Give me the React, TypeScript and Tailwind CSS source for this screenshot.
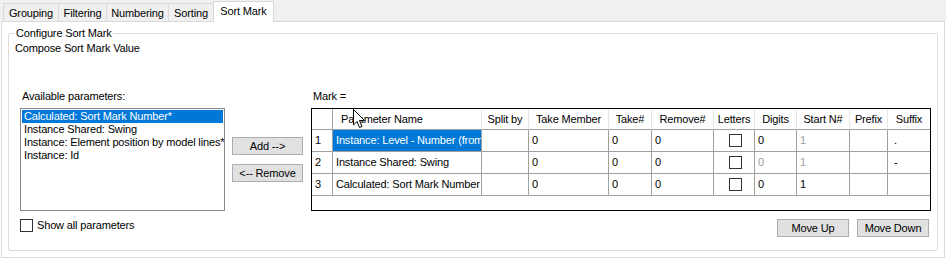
import React from "react";

const font = { fontFamily: '"Liberation Sans", Arial, sans-serif' };

const tabs: [string, string][] = [
  ["Grouping", "w-[55px]"],
  ["Filtering", "w-[48px]"],
  ["Numbering", "w-[62px]"],
  ["Sorting", "w-[45px]"],
];

const cols = [
  "Parameter Name",
  "Split by",
  "Take Member",
  "Take#",
  "Remove#",
  "Letters",
  "Digits",
  "Start N#",
  "Prefix",
  "Suffix",
];

type Row = {
  n: string;
  name: string;
  sel?: boolean;
  digitsGray?: boolean;
  startGray?: boolean;
  suffix: string;
};

const rows: Row[] = [
  { n: "1", name: "Instance: Level - Number (from level)", sel: true, startGray: true, suffix: "." },
  { n: "2", name: "Instance Shared: Swing", digitsGray: true, startGray: true, suffix: "-" },
  { n: "3", name: "Calculated: Sort Mark Number", suffix: "" },
];

function Cell({ children, className = "" }: { children?: React.ReactNode; className?: string }) {
  return (
    <div
      className={
        "h-[22px] border-r border-b border-[#a0a0a0] overflow-hidden whitespace-nowrap pl-[3px] flex items-center " +
        className
      }
    >
      {children}
    </div>
  );
}

export default function App() {
  return (
    <div
      className="w-[946px] h-[259px] bg-white text-[11px] tracking-[-0.15px] text-black overflow-hidden relative"
      style={font}
    >
      {/* tab strip */}
      <div className="h-[21px] bg-[#f0f0f0] flex items-end pl-[3px] relative z-10">
        {tabs.map(([t, w]) => (
          <div
            key={t}
            className={
              w +
              " h-[18px] border-t border-l border-[#d9d9d9] bg-[#f0f0f0] flex items-center justify-center leading-none pt-[1px]"
            }
          >
            {t}
          </div>
        ))}
        <div className="w-[61px] h-[21px] -mb-px border-t border-l border-r border-[#d9d9d9] bg-white flex items-center justify-center leading-none pb-[1px]">
          Sort Mark
        </div>
      </div>

      {/* tab panel */}
      <div className="h-[237px] mx-px border border-[#d9d9d9] pt-[11px] px-[6px]">
        {/* group box */}
        <div className="relative h-[218px] border border-[#dcdcdc] rounded-[2px]">
          <span className="absolute -top-[8px] left-[6px] bg-white px-px leading-[14px]">Configure Sort Mark</span>
          <div className="pl-[6px] pt-[7px] leading-[14px] h-[21px]">Compose Sort Mark Value</div>

          <div className="flex mt-[33px] pl-[11px]">
            {/* left column */}
            <div className="w-[205px] flex flex-col">
              <div className="h-[20px] pl-[2px] leading-[14px] pt-[1px]">Available parameters:</div>
              <div className="h-[103px] border border-[#828790] p-px leading-[13px] overflow-hidden">
                <div className="bg-[#0078d7] text-white pl-[2px] h-[13px] whitespace-nowrap">Calculated: Sort Mark Number*</div>
                <div className="pl-[2px] whitespace-nowrap">Instance Shared: Swing</div>
                <div className="pl-[2px] whitespace-nowrap">Instance: Element position by model lines*</div>
                <div className="pl-[2px] whitespace-nowrap">Instance: Id</div>
              </div>
              <div className="flex items-center mt-[8px] h-[13px]">
                <div className="w-[13px] h-[13px] border border-[#333333] bg-white" />
                <span className="ml-[4px] leading-none">Show all parameters</span>
              </div>
            </div>

            {/* middle buttons */}
            <div className="ml-[7px] pt-[49px] flex flex-col gap-[9px]">
              <div className="w-[71px] h-[18px] bg-[#e1e1e1] border border-[#adadad] flex items-center justify-center">Add --&gt;</div>
              <div className="w-[71px] h-[18px] bg-[#e1e1e1] border border-[#adadad] flex items-center justify-center">&lt;-- Remove</div>
            </div>

            {/* right column */}
            <div className="ml-[8px] w-[620px] flex flex-col">
              <div className="h-[20px] pl-[2px] leading-[14px] pt-[1px]">Mark =</div>
              <div className="relative h-[103px] border border-black bg-white">
                <div className="grid grid-cols-[21px_149px_47px_80px_43px_62px_41px_42px_53px_38px_42px]">
                  <div className="h-[21px] border-r border-b border-[#a0a0a0]" />
                  {cols.map((c, i) => (
                    <div
                      key={c}
                      className={
                        "h-[21px] border-b border-[#a0a0a0] flex items-center whitespace-nowrap overflow-hidden " +
                        (i === 0 ? "pl-[8px] " : "justify-center ") +
                        (i < cols.length - 1 ? "border-r border-r-[#e5e5e5]" : "")
                      }
                    >
                      {c}
                    </div>
                  ))}
                  {rows.map((r) => (
                    <React.Fragment key={r.n}>
                      <Cell className="pl-[3px]">{r.n}</Cell>
                      <Cell className={r.sel ? "bg-[#0078d7] text-white" : ""}>{r.name}</Cell>
                      <Cell />
                      <Cell>0</Cell>
                      <Cell>0</Cell>
                      <Cell>0</Cell>
                      <Cell className="justify-center pl-0">
                        <div className="w-[13px] h-[13px] border border-[#333333] bg-white" />
                      </Cell>
                      <Cell className={r.digitsGray ? "text-[#a0a0a0]" : ""}>0</Cell>
                      <Cell className={r.startGray ? "text-[#a0a0a0]" : ""}>1</Cell>
                      <Cell />
                      <Cell className="border-r-0 pl-[6px]">{r.suffix}</Cell>
                    </React.Fragment>
                  ))}
                </div>
                {/* mouse cursor */}
                <svg className="absolute left-[41px] top-[0px]" width="13" height="20" viewBox="0 0 13 20">
                  <path d="M0.5 0.5 L0.5 16 L4 12.5 L6.5 18.5 L9 17.5 L6.5 11.5 L11.5 11.5 Z" fill="white" stroke="black" strokeWidth="1" />
                </svg>
              </div>
              <div className="flex justify-end gap-[8px] mt-[8px] pr-[2px]">
                <div className="w-[72px] h-[18px] bg-[#e1e1e1] border border-[#adadad] flex items-center justify-center">Move Up</div>
                <div className="w-[72px] h-[18px] bg-[#e1e1e1] border border-[#adadad] flex items-center justify-center">Move Down</div>
              </div>
            </div>
          </div>
        </div>
      </div>
    </div>
  );
}
